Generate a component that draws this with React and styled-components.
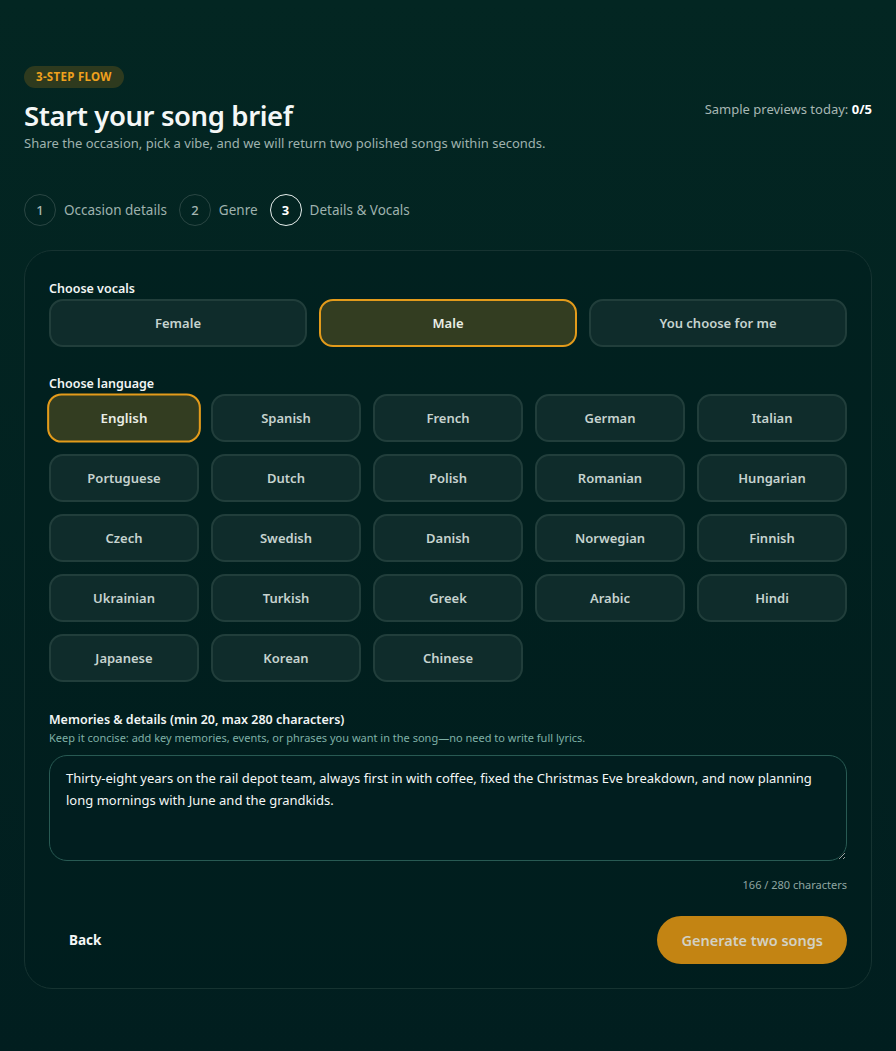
import React from 'react'
import styled, { createGlobalStyle } from 'styled-components'

const GlobalStyle = createGlobalStyle`
  html, body {
    margin: 0;
    padding: 0;
  }
  body {
    background: linear-gradient(180deg, #032622 0%, #011e1f 100%);
    min-height: 100vh;
    font-family: "Noto Sans", "Open Sans", sans-serif;
    color: #f1f5f4;
  }
  * { box-sizing: border-box; }
`

const Page = styled.div`
  width: 896px;
  min-height: 1051px;
  padding: 66px 24px 64px;
`

const Header = styled.header`
  display: flex;
  justify-content: space-between;
  align-items: flex-start;
`

const Intro = styled.div`
  display: flex;
  flex-direction: column;
  align-items: flex-start;
`

const Badge = styled.span`
  display: inline-block;
  background: #2e3a1e;
  color: #f0a11d;
  font-size: 11.5px;
  font-weight: 700;
  letter-spacing: 0.3px;
  padding: 4px 12px;
  border-radius: 999px;
  line-height: 14px;
`

const Title = styled.h1`
  margin: 10px 0 0;
  font-size: 27.5px;
  font-weight: 600;
  line-height: 36px;
  letter-spacing: -0.4px;
  color: #f4f7f6;
`

const Subtitle = styled.p`
  margin: 1px 0 0;
  font-size: 13px;
  line-height: 17px;
  color: #9fb2ae;
`

const Quota = styled.div`
  margin-top: 34px;
  font-size: 13px;
  color: #a7b7b3;
  b { color: #ffffff; font-weight: 700; }
`

const Steps = styled.ol`
  list-style: none;
  display: flex;
  align-items: center;
  gap: 12px;
  margin: 42px 0 24px;
  padding: 0;
`

const Step = styled.li`
  display: flex;
  align-items: center;
  gap: 8px;
  font-size: 13.5px;
  color: #9fb2ae;
`

const StepNum = styled.span`
  width: 32px;
  height: 32px;
  border-radius: 50%;
  display: flex;
  align-items: center;
  justify-content: center;
  font-size: 13px;
  font-weight: ${p => (p.$active ? 700 : 500)};
  color: ${p => (p.$active ? '#ffffff' : '#a7b7b3')};
  border: 1px solid ${p => (p.$active ? '#e6eeec' : '#2a4643')};
`

const Card = styled.section`
  border: 1px solid #163331;
  border-radius: 28px;
  background: rgba(0, 28, 28, 0.35);
  padding: 30px 24px 24px;
`

const Label = styled.div`
  font-size: 12.5px;
  font-weight: 600;
  color: #f1f5f4;
  line-height: 16px;
  margin-bottom: 2px;
`

const Grid = styled.div`
  display: grid;
  grid-template-columns: repeat(${p => p.$cols}, 1fr);
  gap: 12px;
  margin-bottom: ${p => p.$mb || 0}px;
`

const Choice = styled.button`
  height: 48px;
  border-radius: 14px;
  font-family: inherit;
  font-size: 13px;
  font-weight: 600;
  cursor: pointer;
  color: ${p => (p.$selected ? '#eaeee6' : '#c6d3cf')};
  background: ${p => (p.$selected ? '#333d21' : '#0f2c2b')};
  border: ${p => (p.$selected ? '2px solid #e39b1b' : '2px solid #213e3b')};
  transform: ${p => (p.$scale && p.$selected ? 'scale(1.025)' : 'none')};
`

const Hint = styled.div`
  font-size: 11px;
  color: #7fb0a6;
  line-height: 14px;
  margin: 3px 0 10px;
`

const TextArea = styled.textarea`
  display: block;
  width: 100%;
  height: 106px;
  border-radius: 18px;
  border: 1px solid #285a53;
  background: #011e1f;
  color: #f4f7f6;
  font-family: inherit;
  font-size: 13px;
  line-height: 22px;
  padding: 11px 16px;
  resize: vertical;
  outline: none;
`

const Counter = styled.div`
  text-align: right;
  font-size: 11px;
  color: #8fa5a1;
  margin-top: 16px;
`

const Actions = styled.div`
  display: flex;
  justify-content: space-between;
  align-items: center;
  margin-top: 24px;
`

const BackButton = styled.button`
  background: none;
  border: none;
  color: #f4f7f6;
  font-family: inherit;
  font-size: 13.5px;
  font-weight: 700;
  padding: 12px 20px;
  cursor: pointer;
`

const Primary = styled.button`
  height: 48px;
  padding: 0 24px;
  border-radius: 999px;
  border: none;
  background: #c38413;
  color: #d2d1c4;
  font-family: inherit;
  font-size: 14.5px;
  font-weight: 600;
  cursor: not-allowed;
`

const vocals = ['Female', 'Male', 'You choose for me']
const languages = [
  'English', 'Spanish', 'French', 'German', 'Italian',
  'Portuguese', 'Dutch', 'Polish', 'Romanian', 'Hungarian',
  'Czech', 'Swedish', 'Danish', 'Norwegian', 'Finnish',
  'Ukrainian', 'Turkish', 'Greek', 'Arabic', 'Hindi',
  'Japanese', 'Korean', 'Chinese',
]
const steps = ['Occasion details', 'Genre', 'Details & Vocals']

const memory =
  'Thirty-eight years on the rail depot team, always first in with coffee, fixed the Christmas Eve breakdown, and now planning long mornings with June and the grandkids.'

export default function App() {
  return (
    <Page>
      <GlobalStyle />
      <Header>
        <Intro>
          <Badge>3-STEP FLOW</Badge>
          <Title>Start your song brief</Title>
          <Subtitle>Share the occasion, pick a vibe, and we will return two polished songs within seconds.</Subtitle>
        </Intro>
        <Quota>
          Sample previews today: <b>0/5</b>
        </Quota>
      </Header>

      <Steps>
        {steps.map((s, i) => (
          <Step key={s}>
            <StepNum $active={i === 2}>{i + 1}</StepNum>
            {s}
          </Step>
        ))}
      </Steps>

      <Card>
        <Label>Choose vocals</Label>
        <Grid $cols={3} $mb={29}>
          {vocals.map(v => (
            <Choice key={v} $selected={v === 'Male'}>{v}</Choice>
          ))}
        </Grid>

        <Label>Choose language</Label>
        <Grid $cols={5} $mb={30}>
          {languages.map(l => (
            <Choice key={l} $selected={l === 'English'} $scale>{l}</Choice>
          ))}
        </Grid>

        <Label>Memories &amp; details (min 20, max 280 characters)</Label>
        <Hint>Keep it concise: add key memories, events, or phrases you want in the song—no need to write full lyrics.</Hint>
        <TextArea defaultValue={memory} />
        <Counter>{memory.length} / 280 characters</Counter>

        <Actions>
          <BackButton>Back</BackButton>
          <Primary>Generate two songs</Primary>
        </Actions>
      </Card>
    </Page>
  )
}
